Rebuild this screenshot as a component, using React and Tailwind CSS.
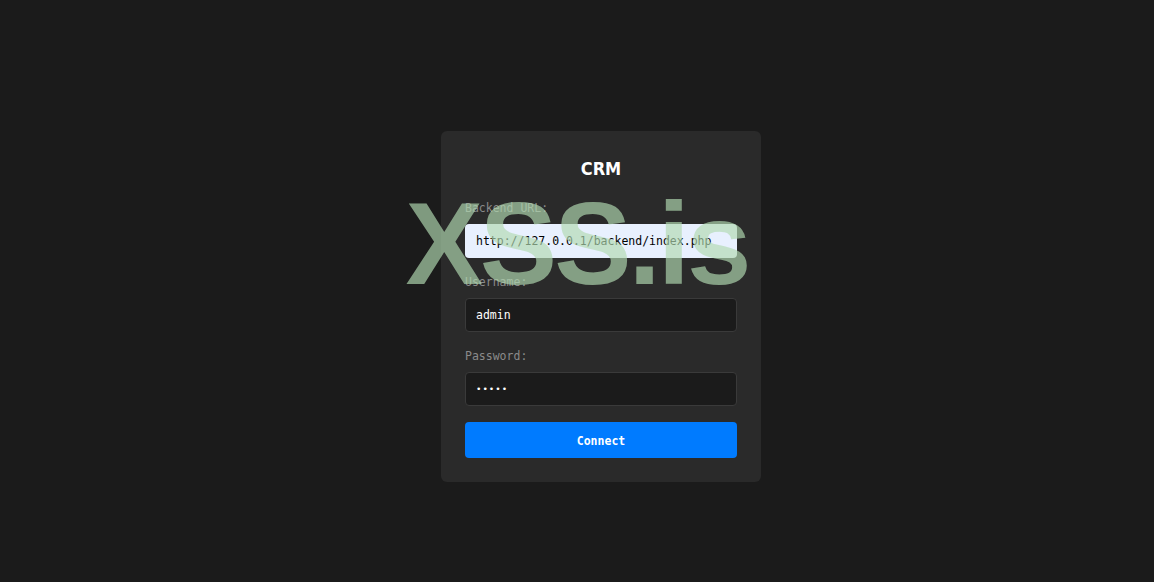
import { useState } from "react";

const Field = ({ label, children }) => (
      <div className="mb-4">
            <label className="block font-['DejaVu_Sans_Mono','Liberation_Mono',monospace] text-[11.5px] leading-4 text-[#8a8a8a] mb-2">
                  {label}
            </label>
            {children}
      </div>
);

const App = () => {
      const [backend, setBackend] = useState("http://127.0.0.1/backend/index.php");
      const [username, setUsername] = useState("admin");
      const [password, setPassword] = useState("admin");

      return (
            <div className="relative min-h-screen w-full overflow-hidden bg-[#1b1b1b]">
                  <div className="flex justify-center pl-12 pt-[131px]">
                        <form
                              onSubmit={(e) => e.preventDefault()}
                              className="w-[320px] rounded-md bg-[#2a2a2a] p-6">
                              <h2 className="text-center font-['Liberation_Sans_Narrow','DejaVu_Sans_Condensed','Liberation_Sans',sans-serif] text-[18px] leading-7 font-bold text-white mb-[17px]">
                                    CRM
                              </h2>
                              <Field label="Backend URL:">
                                    <input
                                          value={backend}
                                          onChange={(e) => setBackend(e.target.value)}
                                          className="block w-full h-[34px] rounded px-[11px] bg-[#e8f0fe] text-black font-['DejaVu_Sans_Mono','Liberation_Mono',monospace] text-[11.5px] outline-none" />
                              </Field>
                              <Field label="Username:">
                                    <input
                                          value={username}
                                          onChange={(e) => setUsername(e.target.value)}
                                          className="block w-full h-[34px] rounded border border-[#3a3a3a] px-[10px] bg-[#1b1b1b] text-white font-['DejaVu_Sans_Mono','Liberation_Mono',monospace] text-[11.5px] outline-none" />
                              </Field>
                              <Field label="Password:">
                                    <input
                                          type="password"
                                          value={password}
                                          onChange={(e) => setPassword(e.target.value)}
                                          className="block w-full h-[34px] rounded border border-[#3a3a3a] px-[10px] bg-[#1b1b1b] text-white font-['DejaVu_Sans_Mono','Liberation_Mono',monospace] text-[9px] tracking-[1px] outline-none" />
                              </Field>
                              <button
                                    type="submit"
                                    className="flex w-full h-9 items-center justify-center pt-[3px] rounded bg-[#007bff] text-white font-['DejaVu_Sans_Mono','Liberation_Mono',monospace] text-[11.5px] font-bold cursor-pointer">
                                    Connect
                              </button>
                        </form>
                  </div>
                  {/* watermark */}
                  <div className="pointer-events-none absolute left-1/2 top-[186px] -translate-x-1/2 whitespace-nowrap font-['Liberation_Sans',Arial,sans-serif] text-[116px] leading-none font-bold tracking-[-3px] text-[rgba(178,218,178,0.67)]">
                        XSS.is
                  </div>
            </div>
      );
};

export default App;
